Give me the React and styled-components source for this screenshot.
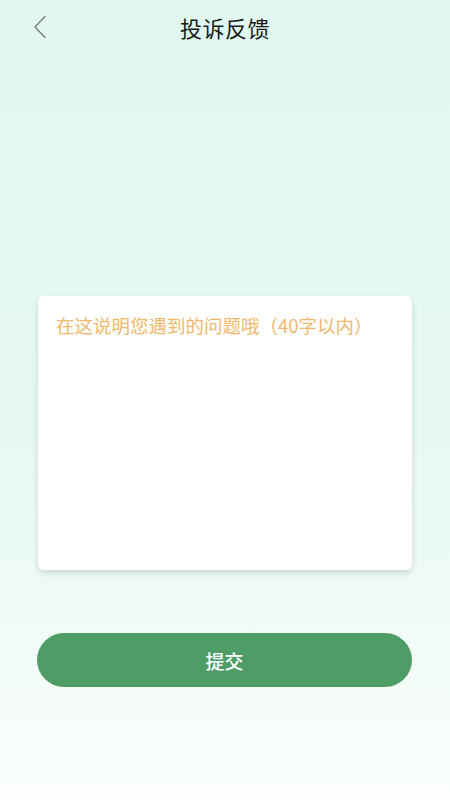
import React from "react";
import styled, { createGlobalStyle } from "styled-components";

const GlobalStyle = createGlobalStyle`
    html, body {
        margin: 0;
        padding: 0;
    }
    body {
        font-family: "Noto Sans CJK SC", "Noto Sans", sans-serif;
    }
    * {
        box-sizing: border-box;
    }
`;

export default function App() {
    const [content, setContent] = React.useState("");

    return (
        <Page>
            <GlobalStyle />
            <Header>
                <BackButton aria-label="back">
                    <svg width="14" height="24" viewBox="0 0 14 24" fill="none">
                        <path d="M12 1.5L2 12l10 10.5" stroke="#7a7a7a" strokeWidth="1.4" strokeLinecap="round" strokeLinejoin="round" />
                    </svg>
                </BackButton>
                <Title>投诉反馈</Title>
            </Header>
            <Body>
                <Card>
                    <TextArea
                        value={content}
                        maxLength={40}
                        onChange={e => setContent(e.target.value)}
                        placeholder="在这说明您遇到的问题哦（40字以内）"
                    />
                </Card>
                <SubmitButton>提交</SubmitButton>
            </Body>
        </Page>
    );
}

const Page = styled.div`
    min-height: 800px;
    width: 100%;
    background: linear-gradient(180deg, #e0f8f0 0%, #e6f9f1 55%, #f4fcf8 85%, #fbfefc 100%);
    display: flex;
    flex-direction: column;
`;

const Header = styled.div`
    position: relative;
    height: 54px;
    display: flex;
    align-items: center;
    justify-content: center;
`;

const BackButton = styled.button`
    position: absolute;
    left: 33px;
    top: 15px;
    border: none;
    background: none;
    padding: 0;
    cursor: pointer;
    display: flex;
`;

const Title = styled.h1`
    margin: 0;
    font: 400 22px "Noto Sans CJK SC", sans-serif;
    color: #1a1a1a;
    letter-spacing: 0.5px;
`;

const Body = styled.div`
    display: flex;
    flex-direction: column;
    padding: 242px 38px 0 38px;
`;

const Card = styled.div`
    height: 274px;
    background: #ffffff;
    border-radius: 6px;
    box-shadow: 0 3px 6px rgba(0, 0, 0, 0.14);
    padding: 16px 18px;
`;

const TextArea = styled.textarea`
    width: 100%;
    height: 100%;
    border: none;
    outline: none;
    resize: none;
    background: transparent;
    font: 400 18.5px "Noto Sans CJK SC", sans-serif;
    color: #333;
    padding: 0;
    &::placeholder {
        color: #f0b86c;
    }
`;

const SubmitButton = styled.button`
    margin-top: 63px;
    margin-left: -1px;
    height: 54px;
    border: none;
    border-radius: 27px;
    background: #4e9d67;
    color: #ffffff;
    font: 500 19px "Noto Sans CJK SC", sans-serif;
    cursor: pointer;
`;
